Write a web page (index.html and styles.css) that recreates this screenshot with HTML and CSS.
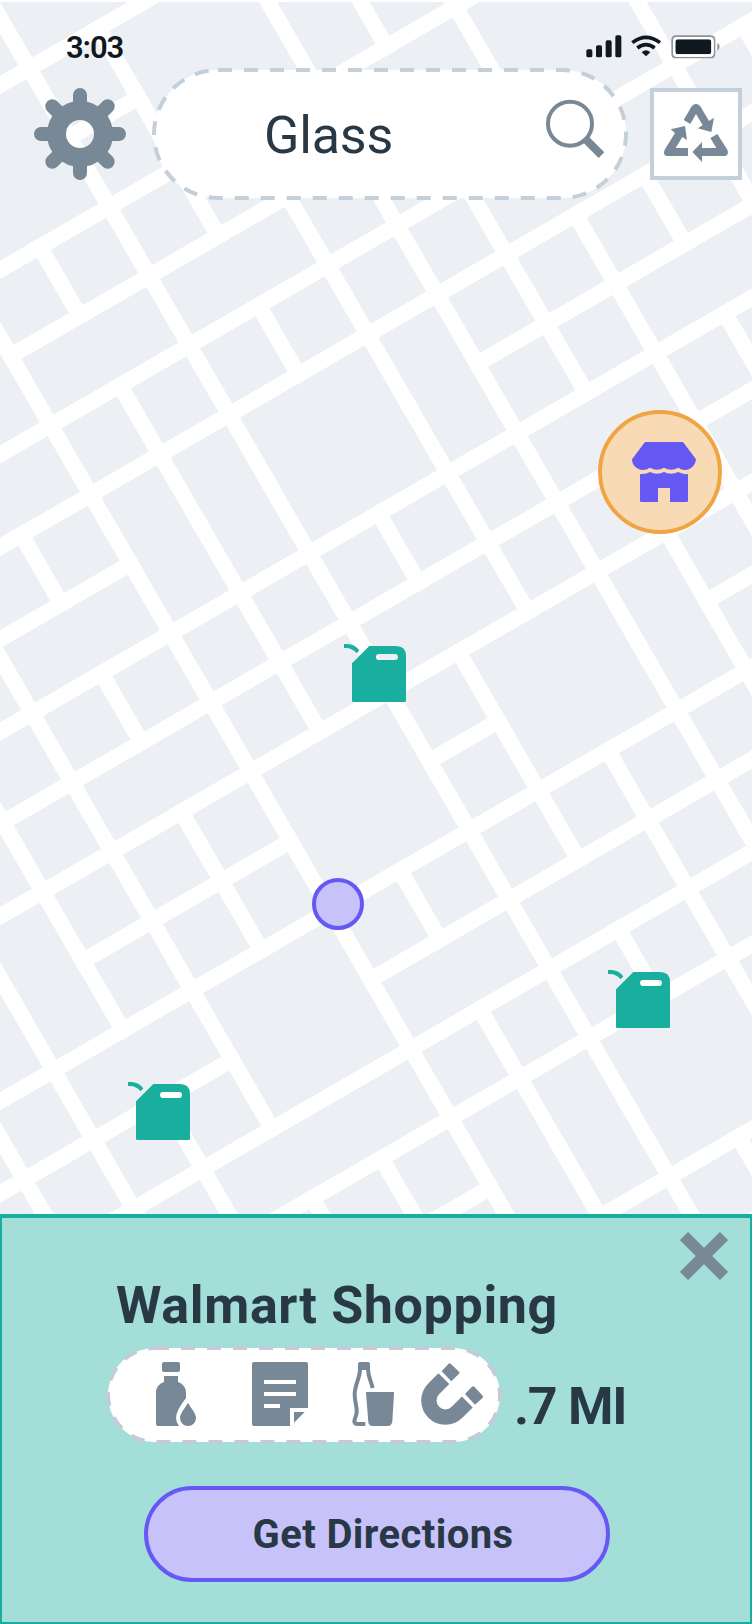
FILE: index.html
```html
<!DOCTYPE html>
<html lang="en">
<head>
<meta charset="utf-8">
<title>Recycling map</title>
<link rel="stylesheet" href="styles.css">
</head>
<body>
<div class="screen">
  <svg class="map" width="752" height="1214" viewBox="0 2 752 1214">
    <defs>
      <pattern id="blocks" width="80" height="80" patternUnits="userSpaceOnUse"><rect class="block" width="64" height="64"/></pattern>
      <symbol id="can" viewBox="384 810 186 174">
        <path d="M384 810c22-1 36 5 46 19l-8 9c-9-11-20-17-38-16z"/>
        <path fill-rule="evenodd" d="M460 816H540Q570 816 570 846V980q0 4-4 4H412q-4 0-4-4V868zM489 840a9 9 0 0 0 0 18H537a9 9 0 0 0 0-18z"/>
      </symbol>
    </defs>
    <g transform="translate(120.1 209.7) rotate(-30)">
      <rect x="-800" y="-480" width="1600" height="1840" fill="url(#blocks)"/>
      <!-- blocks that span several grid cells -->
      <path class="block" d="M0 80h144v64h-144zM-160 80h144v64h-144zM-320 160h144v64h-144zM-240 0h64v144h-64zM-160 -160h144v144h-144zM80 -160h144v144h-144zM0 -240h144v64h-144zM240 -160h64v144h-64zM240 0h144v64h-144zM400 0h144v144h-144zM320 160h224v64h-224zM560 80h144v64h-144zM400 320h144v64h-144zM160 240h64v144h-64zM0 240h144v144h-144zM-80 240h64v144h-64zM-160 240h64v144h-64zM-320 320h144v64h-144zM240 400h144v64h-144zM0 480h144v64h-144zM-320 480h144v64h-144zM-160 560h144v144h-144zM-480 560h64v144h-64zM-560 560h64v144h-64zM-480 720h144v64h-144zM-320 720h144v144h-144zM80 560h144v144h-144zM240 560h64v144h-64zM0 800h144v64h-144zM-160 800h144v64h-144zM-80 960h64v144h-64zM0 960h144v144h-144zM-160 960h64v144h-64zM-400 880h224v64h-224z"/>
    </g>
  </svg>

  <div class="pin pin-store">
    <svg width="64" height="60" viewBox="768 108 192 180"><path d="M807 108H921L960 160C958 178 945 192 928 192Q915 192 907 185Q886 197 864 185Q843 197 822 185Q812 192 800 192C783 192 768 178 768 160zM792 204Q812 205 822 198Q843 209 864 198Q886 209 907 198Q920 206 936 204V284q0 4-4 4H882V246H846V288H796q-4 0-4-4z"/></svg>
  </div>
  <svg class="pin pin-can can-a"><use href="#can"/></svg>
  <svg class="pin pin-can can-b"><use href="#can"/></svg>
  <svg class="pin pin-can can-c"><use href="#can"/></svg>
  <div class="pin pin-me"></div>

  <header class="status">
    <span class="time">3:03</span>
    <svg class="signals" width="134" height="24" viewBox="632 104 402 72">
      <g class="ink">
        <rect x="633" y="147" width="18" height="24" rx="5"/><rect x="662" y="135" width="18" height="36" rx="5"/><rect x="691" y="120" width="18" height="51" rx="5"/><rect x="720" y="105" width="18" height="66" rx="5"/>
        <path d="M812 168l-13-12q13-12 26 0z"/><rect x="900" y="117" width="108" height="45" rx="7"/>
      </g>
      <path class="wave" d="M771 127q41-32 83 0M786 143q26-20 52 0"/>
      <path class="shell" fill-rule="evenodd" d="M902 105h104q14 0 14 14v41q0 14-14 14H902q-14 0-14-14v-41q0-14 14-14zM904 110q-11 0-11 11v37q0 11 11 11h100q11 0 11-11v-37q0-11-11-11zM1026 127q14 12 0 24z"/>
      <path class="gap" fill-rule="evenodd" d="M904 110q-11 0-11 11v37q0 11 11 11h100q11 0 11-11v-37q0-11-11-11zM907 117h94q7 0 7 7v31q0 7-7 7h-94q-7 0-7-7v-31q0-7 7-7z"/>
    </svg>
  </header>

  <div class="toolbar">
    <svg class="gear" width="92" height="92" viewBox="-46 -46 92 92">
      <circle r="23.5" class="gear-body"/>
      <path class="gear-teeth" d="M0-28V-39M0 28V39M-28 0H-39M28 0H39M-20-20L-27.7-27.7M20-20L27.7-27.7M-20 20L-27.7 27.7M20 20L27.7 27.7"/>
    </svg>
    <div class="search">
      <svg class="outline" width="476" height="132"><rect x="2" y="2" width="472" height="128" rx="64"/></svg>
      <span class="query">Glass</span>
      <svg class="lens" width="60" height="60" viewBox="545 98 60 60"><circle cx="570" cy="123.7" r="22"/><path d="M584.5 138.2L601.5 155.2"/></svg>
    </div>
    <div class="recycle">
      <svg width="92" height="92" viewBox="822 264 276 276"><path d="M923 360L947 319Q960 304 973 319L999 363L1014 353L1006 396L965 385L980 376L960 342L943 372zM936 444V468H874Q859 466 866 449L897 399L884 388L927 378L933 420L919 411L899 444zM1003 414L1024 402L1054 449Q1060 464 1047 468H978V486L949 456L978 426V444H1021z"/></svg>
    </div>
  </div>

  <section class="panel">
    <svg class="close" width="48" height="48" viewBox="0 0 48 48"><path d="M4 4L44 44M44 4L4 44"/></svg>
    <h1 class="title">Walmart Shopping</h1>
    <div class="row">
      <div class="materials">
        <svg class="outline" width="396" height="98"><rect x="2" y="2" width="392" height="94" rx="47"/></svg>
        <svg class="mat bottle" width="40" height="64" viewBox="168 306 120 192"><rect x="186" y="306" width="54" height="30" rx="6"/><path d="M192 348H234V366C250 372 258 384 258 398V414Q228 452 228 474Q228 488 237 498H174q-6 0-6-6V398C168 384 176 372 192 366zM264 429C275 446 288 462 288 474A24 24 0 0 1 240 474C240 462 253 446 264 429z"/></svg>
        <svg class="mat note" width="56" height="64" viewBox="456 306 168 192"><path fill-rule="evenodd" d="M462 306H618q6 0 6 6V444H570V498H462q-6 0-6-6V312q0-6 6-6zM492 360v12h96v-12zM492 396v12h96v-12zM492 432v12h48v-12zM582 456H614L582 488z"/></svg>
        <svg class="mat cup" width="43" height="64" viewBox="756 306 129 192"><path d="M774 330V312q0-6 6-6h24q6 0 6 6v18zM800 396H880q3 0 2 4L877 484q-1 14-15 14H818q-12 0-13-12L798 400q0-4 2-4z"/><path class="line" d="M780 326C780 355 765 372 764 402C764 430 772 440 770 458C769 470 763 476 763 484Q763 492 774 492H796M804 326C804 350 812 360 818 384"/></svg>
        <svg class="mat magnet" width="62" height="62" viewBox="153 459 186 186"><path class="arc" d="M221.500 506L191 536.500A49.500 49.500 0 0 0 261.500 606.500L292 576"/><path d="M215 484L236 461q3-3 6 0L267 485q3 3 0 6L244 514zM285 552L306 530q4-3 7 0L338 557q3 3 0 6L315 584z"/></svg>
      </div>
      <span class="distance">.7 MI</span>
    </div>
    <button class="directions">Get Directions</button>
  </section>
</div>
</body>
</html>
```
FILE: styles.css
```css
body { margin: 0; font-family: Roboto, "Liberation Sans", sans-serif; color: #293845; }
svg { display: block; }
.screen { position: relative; width: 752px; height: 1624px; overflow: hidden; background: #fff; display: flex; flex-direction: column; }

.map { position: absolute; left: 0; top: 2px; }
.block { fill: #ecf0f5; }
.pin { position: absolute; box-sizing: border-box; }
.pin-store { left: 598px; top: 410px; width: 124px; height: 124px; border: 4px solid #f0a544; border-radius: 50%; background: #f8dab4; padding: 28px 0 0 30px; fill: #6558f5; }
.pin-can { width: 62px; height: 58px; fill: #1aae9f; }
.can-a { left: 344px; top: 644px; }
.can-b { left: 608px; top: 970px; }
.can-c { left: 128px; top: 1082px; }
.pin-me { left: 312px; top: 878px; width: 52px; height: 52px; border: 4px solid #6558f5; border-radius: 50%; background: #c7c2fa; }

.status { position: relative; height: 68px; display: flex; justify-content: space-between; align-items: flex-start; padding: 0 32px 0 66px; box-sizing: border-box; }
.time { font-size: 31px; line-height: 36px; font-weight: 600; letter-spacing: -1.1px; color: #101820; margin-top: 30px; }
.signals { margin-top: 35px; }
.ink { fill: #101820; }
.wave { fill: none; stroke: #101820; stroke-width: 11; }
.shell { fill: #909396; }
.gap { fill: #fff; }

.toolbar { position: relative; height: 132px; display: flex; align-items: center; padding-left: 34px; }
.gear { fill: none; stroke: #788896; margin-right: 26px; }
.gear-body { stroke-width: 19; }
.gear-teeth { stroke-width: 14; stroke-linecap: round; }
.search { position: relative; width: 476px; height: 132px; display: flex; align-items: center; justify-content: space-between; margin-right: 22px; box-sizing: border-box; padding: 0 23px 0 112px; }
.outline { position: absolute; left: 0; top: 0; fill: #fff; stroke: #c3cfd9; stroke-width: 4; stroke-dasharray: 14 12; }
.query { position: relative; font-size: 52px; line-height: 60px; padding-top: 3px; letter-spacing: -0.2px; }
.lens { position: relative; fill: none; stroke: #788896; stroke-width: 4; margin-top: -12px; }
.lens path { stroke-width: 8; }
.recycle { width: 92px; height: 92px; box-sizing: border-box; background: #fff; border: 4px solid #c3cfd9; fill: #788896; }
.recycle svg { margin: -4px; }

.panel { position: relative; margin: 1014px -2px -2px; height: 412px; box-sizing: border-box; border: 4px solid #1aae9f; background: #a3dfd8; padding: 58px 0 0 104px; }
.close { position: absolute; right: 22px; top: 14px; stroke: #788896; stroke-width: 11.5; }
.title { margin: 0 0 10px 10px; font-size: 52px; line-height: 60px; font-weight: 700; letter-spacing: 0.65px; white-space: nowrap; }
.row { display: flex; align-items: flex-start; height: 98px; }
.materials { position: relative; width: 396px; height: 98px; display: flex; padding: 16px 0 0 50px; box-sizing: border-box; fill: #788896; }
.materials .outline { stroke: #c3cbd8; }
.mat { position: relative; flex: none; }
.bottle { margin-right: 56px; }
.note { margin-right: 44px; }
.cup { margin-right: 26px; }
.magnet { margin-top: 1px; }
.line { fill: none; stroke: #788896; stroke-width: 12; }
.arc { fill: none; stroke: #788896; stroke-width: 46; }
.distance { margin: 31px 0 0 12px; font-size: 52px; line-height: 60px; font-weight: 700; letter-spacing: -1.3px; white-space: nowrap; }
.directions { display: block; margin: 42px 0 0 38px; width: 466px; height: 96px; box-sizing: border-box; border: 4px solid #6558f5; border-radius: 48px; background: #c7c2fa; font: 700 40px/48px Roboto, "Liberation Sans", sans-serif; letter-spacing: 0.4px; color: #293845; padding: 2px 0 0 12px; }
```
